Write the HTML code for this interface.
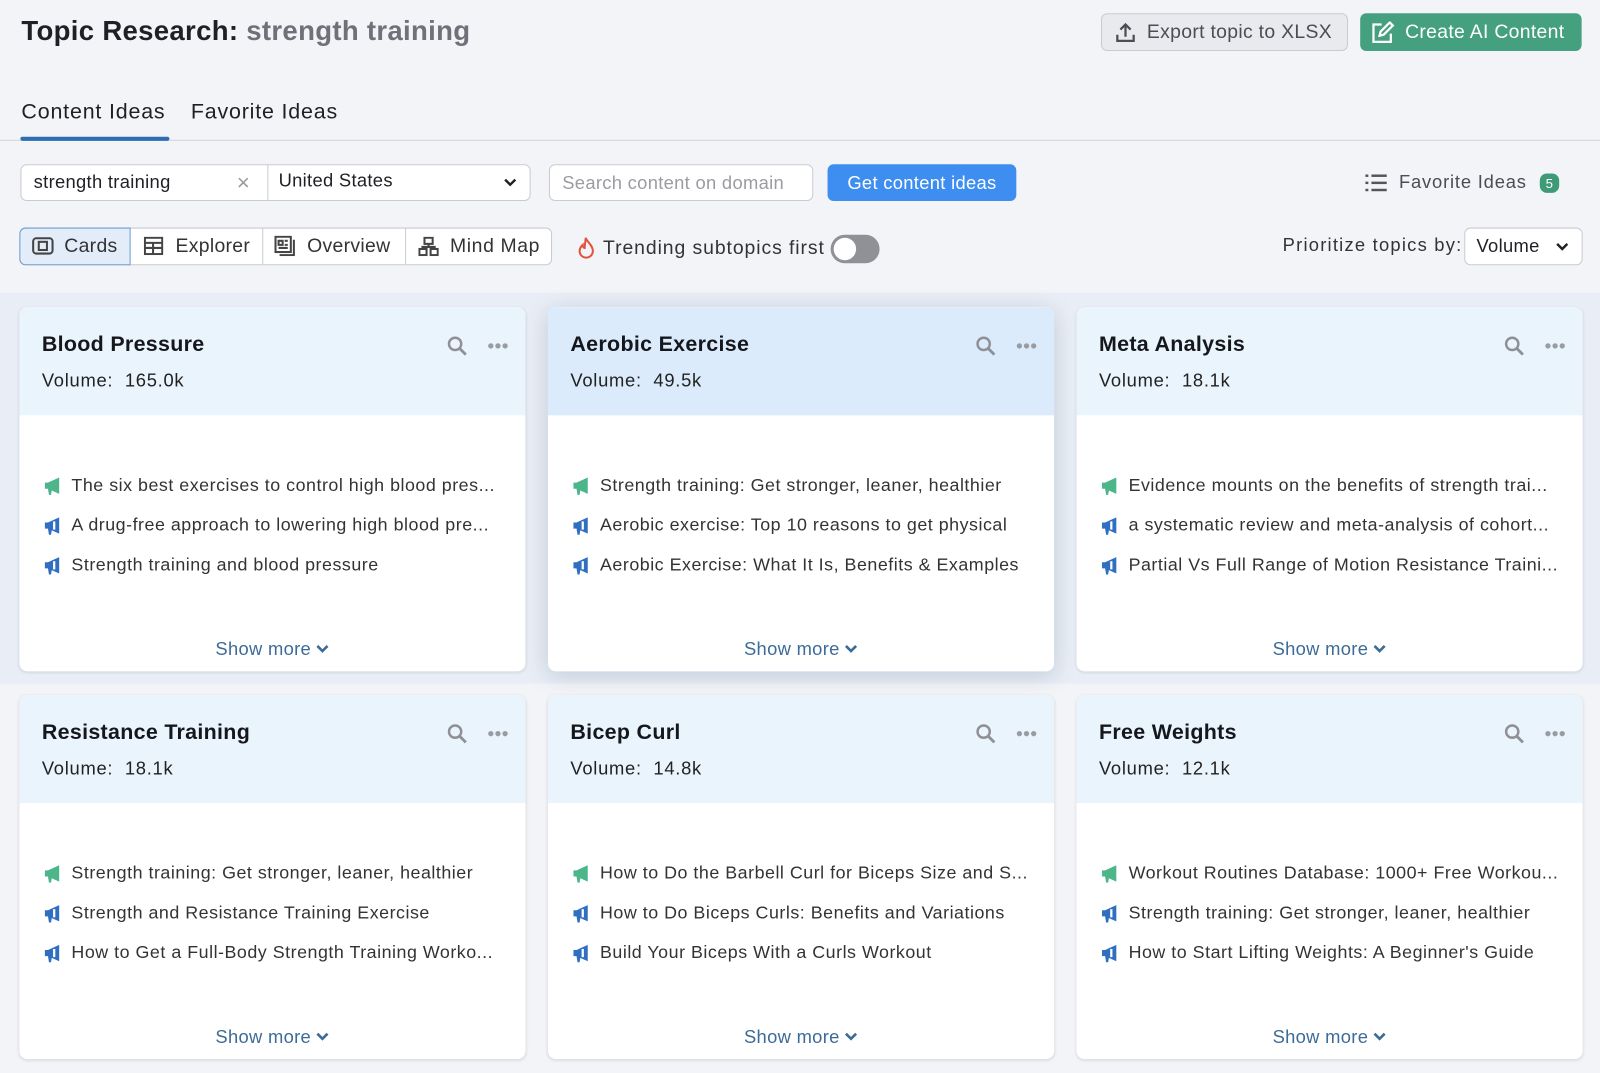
<!DOCTYPE html>
<html><head><meta charset="utf-8"><style>
*{margin:0;padding:0;box-sizing:border-box}
body{width:1600px;height:1073px;overflow:hidden;background:#f3f4f8;font-family:"Liberation Sans",sans-serif;color:#1f2025;letter-spacing:0.3px}
#w{position:absolute;left:0;top:0;width:1568px;height:1052px;transform:scale(1.0204);transform-origin:0 0}
.a{position:absolute;white-space:nowrap}
.btn{position:absolute;border-radius:6px;display:flex;align-items:center;font-size:19px}
.card{position:absolute;width:496px;height:357px;background:#fff;border-radius:8px;box-shadow:0 1px 3px rgba(0,0,0,.12);overflow:hidden}
.card .hd{height:106px;background:#eaf4fd;position:relative}
.card.hi{box-shadow:0 4px 22px rgba(60,80,120,.22)}
.card.hi .hd{background:#dcebfb}
.card h3{position:absolute;left:22px;top:25px;font-size:21px;font-weight:bold;color:#15171c}
.card .v{position:absolute;left:22px;top:62px;font-size:18px;color:#222;letter-spacing:0.7px}
.card .ic{position:absolute;right:16px;top:28px}
.card ul{list-style:none;position:absolute;left:24px;top:164px}
.card li{height:39px;font-size:17.5px;letter-spacing:0.5px;color:#333;display:flex;align-items:flex-start;white-space:nowrap}
.card li svg{margin-right:9px;margin-top:2px;flex:none}
.card .sm{position:absolute;left:0;right:0;top:325px;text-align:center;font-size:18px;color:#3c6b98}
.card .sm svg{margin-left:4px;vertical-align:1px}
</style></head><body><div id="w">
<div class="a" style="left:0;top:287px;width:1568px;height:383px;background:#e9eef6"></div>
<div class="a" style="left:21px;top:15px;font-size:27px;font-weight:bold">Topic Research: <span style="color:#6f7178">strength training</span></div>
<div class="btn" style="left:1079px;top:13px;width:242px;height:37px;border:1px solid #c9cbd1;background:#e9eaee;color:#4b4d55;padding-left:12px">
<svg width="22" height="20" viewBox="0 0 22 20"><path d="M11 14V3M6 7l5-5 5 5M3 12v6h16v-6" fill="none" stroke="#4b4d55" stroke-width="2.2"/></svg><span style="margin-left:10px">Export topic to XLSX</span></div>
<div class="btn" style="left:1333px;top:13px;width:217px;height:37px;background:#44a07f;color:#fff;padding-left:10px">
<svg width="24" height="22" viewBox="0 0 24 22"><path d="M11 3H3v17h17v-8" fill="none" stroke="#fff" stroke-width="2.2"/><path d="M9 14l1-4 9-9 3 3-9 9z" fill="none" stroke="#fff" stroke-width="2.2"/></svg><span style="margin-left:10px">Create AI Content</span></div>
<div class="a" style="left:21px;top:98px;font-size:21px;letter-spacing:0.8px">Content Ideas</div>
<div class="a" style="left:187px;top:98px;font-size:21px;letter-spacing:0.8px">Favorite Ideas</div>
<div class="a" style="left:0;top:137px;width:1568px;height:1px;background:#d3d5da"></div>
<div class="a" style="left:20px;top:134px;width:146px;height:4px;background:#2e6db3;border-radius:2px"></div>
<div class="a" style="left:20px;top:161px;width:500px;height:36px;background:#fff;border:1px solid #c9cbd1;border-radius:6px"></div>
<div class="a" style="left:262px;top:161px;width:1px;height:36px;background:#c9cbd1"></div>
<div class="a" style="left:33px;top:168px;font-size:18px">strength training</div>
<div class="a" style="left:232px;top:166px;font-size:22px;color:#9a9ca2">×</div>
<div class="a" style="left:273px;top:167px;font-size:18px">United States</div>
<svg class="a" style="left:493px;top:174px" width="14" height="10" viewBox="0 0 14 10"><path d="M2 2l5 5 5-5" fill="none" stroke="#222" stroke-width="2.4"/></svg>
<div class="a" style="left:538px;top:161px;width:259px;height:36px;background:#fff;border:1px solid #c9cbd1;border-radius:6px;font-size:18px;color:#9a9ca2;padding:7px 0 0 12px">Search content on domain</div>
<div class="btn" style="left:811px;top:161px;width:185px;height:36px;background:#3d8ef0;color:#fff;justify-content:center;font-size:18px">Get content ideas</div>
<svg class="a" style="left:1338px;top:170px" width="22" height="18" viewBox="0 0 22 18"><g fill="#555"><rect x="0" y="1" width="3" height="2.4"/><rect x="0" y="8" width="3" height="2.4"/><rect x="0" y="15" width="3" height="2.4"/><rect x="6" y="1" width="15" height="2.4"/><rect x="6" y="8" width="15" height="2.4"/><rect x="6" y="15" width="15" height="2.4"/></g></svg>
<div class="a" style="left:1371px;top:168px;font-size:18px;color:#4b4d55;letter-spacing:0.8px">Favorite Ideas</div>
<div class="a" style="left:1509px;top:170px;width:19px;height:19px;border-radius:7px;background:#3f9a78;color:#fff;font-size:13px;text-align:center;line-height:19px">5</div>
<div class="a" style="left:19px;top:223px;width:522px;height:37px;background:#fff;border:1px solid #c9cbd1;border-radius:6px"></div>
<div class="a" style="left:19px;top:223px;width:109px;height:37px;background:#e3edf9;border:1px solid #6e9bd0;border-radius:6px 0 0 6px"></div>
<div class="a" style="left:257px;top:224px;width:1px;height:35px;background:#c9cbd1"></div>
<div class="a" style="left:397px;top:224px;width:1px;height:35px;background:#c9cbd1"></div>
<svg class="a" style="left:31px;top:232px" width="22" height="18" viewBox="0 0 22 18"><rect x="1.5" y="1.5" width="19" height="15" rx="3" fill="none" stroke="#444" stroke-width="2"/><rect x="7" y="5" width="8" height="8" fill="none" stroke="#444" stroke-width="2"/></svg>
<div class="a" style="left:63px;top:231px;font-size:19px;color:#333">Cards</div>
<svg class="a" style="left:141px;top:232px" width="19" height="18" viewBox="0 0 19 18"><rect x="1" y="1" width="17" height="16" fill="none" stroke="#444" stroke-width="2"/><path d="M1 6h17M1 11h17M9 6v11" stroke="#444" stroke-width="2"/></svg>
<div class="a" style="left:172px;top:231px;font-size:19px;color:#333">Explorer</div>
<svg class="a" style="left:269px;top:231px" width="21" height="20" viewBox="0 0 21 20"><rect x="1" y="1" width="15" height="15" fill="none" stroke="#444" stroke-width="2"/><path d="M4 5h4v4H4zM10 5h3M10 9h3M4 12h9M19 4v15H5" fill="none" stroke="#444" stroke-width="2"/></svg>
<div class="a" style="left:301px;top:231px;font-size:19px;color:#333">Overview</div>
<svg class="a" style="left:410px;top:232px" width="20" height="19" viewBox="0 0 20 19"><rect x="6" y="1" width="8" height="6" fill="none" stroke="#444" stroke-width="2"/><rect x="1" y="12" width="7" height="6" fill="none" stroke="#444" stroke-width="2"/><rect x="12" y="12" width="7" height="6" fill="none" stroke="#444" stroke-width="2"/><path d="M10 7v3M4 12v-2h12v2" fill="none" stroke="#444" stroke-width="2"/></svg>
<div class="a" style="left:441px;top:231px;font-size:19px;color:#333;letter-spacing:0.6px">Mind Map</div>
<svg class="a" style="left:566px;top:232px" width="17" height="22" viewBox="0 0 17 22"><path d="M8 1c1 4 7 7 7 13a6.5 6.5 0 0 1-13 0c0-3 2-5 3-6 0 2 1 3 2 3 0-4 1-7 1-10z" fill="none" stroke="#e5513d" stroke-width="2"/></svg>
<div class="a" style="left:591px;top:233px;font-size:19px;color:#333;letter-spacing:0.9px">Trending subtopics first</div>
<div class="a" style="left:814px;top:230px;width:48px;height:28px;border-radius:14px;background:#8f9196"></div>
<div class="a" style="left:817px;top:233px;width:22px;height:22px;border-radius:11px;background:#fff"></div>
<div class="a" style="left:1257px;top:230px;font-size:18px;color:#333;letter-spacing:1.2px">Prioritize topics by:</div>
<div class="a" style="left:1435px;top:223px;width:116px;height:37px;background:#fff;border:1px solid #c9cbd1;border-radius:6px;font-size:18px;padding:7px 0 0 11px">Volume</div>
<svg class="a" style="left:1524px;top:237px" width="14" height="10" viewBox="0 0 14 10"><path d="M2 2l5 5 5-5" fill="none" stroke="#222" stroke-width="2.4"/></svg>

<svg width="0" height="0" style="position:absolute"><defs>
<symbol id="mg" viewBox="0 0 18 20"><path d="M1 6h3l11-5v16L4 12H1z"/><path d="M4 12h4l-1 6H5z"/></symbol>
<symbol id="mb" viewBox="0 0 18 20"><path d="M1 6h3l11-5v16L4 12H1z"/><path d="M4 12h4l-1 6H5z"/><rect x="9" y="5" width="2.2" height="8" fill="#fff"/></symbol>
<symbol id="hic" viewBox="0 0 72 22"><circle cx="19" cy="8" r="6" fill="none" stroke="#8e9096" stroke-width="2.4"/><path d="M23.5 12.5l6 6" stroke="#8e9096" stroke-width="2.8"/><circle cx="54" cy="10" r="2.6" fill="#9a9ca2"/><circle cx="61" cy="10" r="2.6" fill="#9a9ca2"/><circle cx="68" cy="10" r="2.6" fill="#9a9ca2"/></symbol>
<symbol id="chv" viewBox="0 0 14 10"><path d="M2 2l5 5 5-5" fill="none" stroke="#3c6b98" stroke-width="2.6"/></symbol>
</defs></svg>

<div class="card" style="left:19px;top:301px"><div class="hd"><h3>Blood Pressure</h3><div class="v">Volume:&nbsp; 165.0k</div><svg class="ic" width="72" height="22"><use href="#hic"/></svg></div>
<ul><li><svg width="18" height="20" fill="#4cb58a"><use href="#mg"/></svg>The six best exercises to control high blood pres...</li><li><svg width="18" height="20" fill="#2f6ec1"><use href="#mb"/></svg>A drug-free approach to lowering high blood pre...</li><li><svg width="18" height="20" fill="#2f6ec1"><use href="#mb"/></svg>Strength training and blood pressure</li></ul><div class="sm">Show more<svg width="14" height="10"><use href="#chv"/></svg></div></div>

<div class="card hi" style="left:537px;top:301px"><div class="hd"><h3>Aerobic Exercise</h3><div class="v">Volume:&nbsp; 49.5k</div><svg class="ic" width="72" height="22"><use href="#hic"/></svg></div>
<ul><li><svg width="18" height="20" fill="#4cb58a"><use href="#mg"/></svg>Strength training: Get stronger, leaner, healthier</li><li><svg width="18" height="20" fill="#2f6ec1"><use href="#mb"/></svg>Aerobic exercise: Top 10 reasons to get physical</li><li><svg width="18" height="20" fill="#2f6ec1"><use href="#mb"/></svg>Aerobic Exercise: What It Is, Benefits &amp; Examples</li></ul><div class="sm">Show more<svg width="14" height="10"><use href="#chv"/></svg></div></div>

<div class="card" style="left:1055px;top:301px"><div class="hd"><h3>Meta Analysis</h3><div class="v">Volume:&nbsp; 18.1k</div><svg class="ic" width="72" height="22"><use href="#hic"/></svg></div>
<ul><li><svg width="18" height="20" fill="#4cb58a"><use href="#mg"/></svg>Evidence mounts on the benefits of strength trai...</li><li><svg width="18" height="20" fill="#2f6ec1"><use href="#mb"/></svg>a systematic review and meta-analysis of cohort...</li><li><svg width="18" height="20" fill="#2f6ec1"><use href="#mb"/></svg>Partial Vs Full Range of Motion Resistance Traini...</li></ul><div class="sm">Show more<svg width="14" height="10"><use href="#chv"/></svg></div></div>

<div class="card" style="left:19px;top:681px"><div class="hd"><h3>Resistance Training</h3><div class="v">Volume:&nbsp; 18.1k</div><svg class="ic" width="72" height="22"><use href="#hic"/></svg></div>
<ul><li><svg width="18" height="20" fill="#4cb58a"><use href="#mg"/></svg>Strength training: Get stronger, leaner, healthier</li><li><svg width="18" height="20" fill="#2f6ec1"><use href="#mb"/></svg>Strength and Resistance Training Exercise</li><li><svg width="18" height="20" fill="#2f6ec1"><use href="#mb"/></svg>How to Get a Full-Body Strength Training Worko...</li></ul><div class="sm">Show more<svg width="14" height="10"><use href="#chv"/></svg></div></div>

<div class="card" style="left:537px;top:681px"><div class="hd"><h3>Bicep Curl</h3><div class="v">Volume:&nbsp; 14.8k</div><svg class="ic" width="72" height="22"><use href="#hic"/></svg></div>
<ul><li><svg width="18" height="20" fill="#4cb58a"><use href="#mg"/></svg>How to Do the Barbell Curl for Biceps Size and S...</li><li><svg width="18" height="20" fill="#2f6ec1"><use href="#mb"/></svg>How to Do Biceps Curls: Benefits and Variations</li><li><svg width="18" height="20" fill="#2f6ec1"><use href="#mb"/></svg>Build Your Biceps With a Curls Workout</li></ul><div class="sm">Show more<svg width="14" height="10"><use href="#chv"/></svg></div></div>

<div class="card" style="left:1055px;top:681px"><div class="hd"><h3>Free Weights</h3><div class="v">Volume:&nbsp; 12.1k</div><svg class="ic" width="72" height="22"><use href="#hic"/></svg></div>
<ul><li><svg width="18" height="20" fill="#4cb58a"><use href="#mg"/></svg>Workout Routines Database: 1000+ Free Workou...</li><li><svg width="18" height="20" fill="#2f6ec1"><use href="#mb"/></svg>Strength training: Get stronger, leaner, healthier</li><li><svg width="18" height="20" fill="#2f6ec1"><use href="#mb"/></svg>How to Start Lifting Weights: A Beginner's Guide</li></ul><div class="sm">Show more<svg width="14" height="10"><use href="#chv"/></svg></div></div>
</div></body></html>
